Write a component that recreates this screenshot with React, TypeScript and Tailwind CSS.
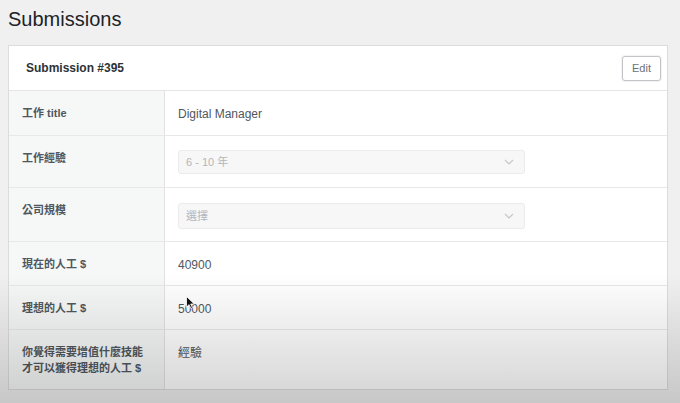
import React from "react";

const font = { fontFamily: '"Liberation Sans", "Noto Sans CJK TC", Arial, sans-serif' };

type Row = { label: React.ReactNode; h: string; value: React.ReactNode };

function Select({ text, h }: { text: string; h: string }) {
  return (
    <div
      className={`flex w-[347px] ${h} items-center justify-between rounded-[3px] border border-[#ebebec] bg-[#f7f7f8] pl-[7px] pr-[10px] text-[11px] text-[#b4b6b9]`}
    >
      <span>{text}</span>
      <svg width="10" height="6" viewBox="0 0 10 6" fill="none" stroke="#c5c7ca" strokeWidth="1.2">
        <path d="M1 1l4 4 4-4" />
      </svg>
    </div>
  );
}

const rows: Row[] = [
  { label: "工作 title", h: "h-[44px]", value: <span className="leading-[14px]">Digital Manager</span> },
  { label: "工作經驗", h: "h-[52px]", value: <Select text="6 - 10 年" h="h-[24px]" /> },
  { label: "公司規模", h: "h-[54px]", value: <div className="pt-px"><Select text="選擇" h="h-[26px]" /></div> },
  { label: "現在的人工 $", h: "h-[44px]", value: <span className="leading-[14px]">40900</span> },
  { label: "理想的人工 $", h: "h-[44px]", value: <span className="leading-[14px]">50000</span> },
  {
    label: (
      <>
        你覺得需要增值什麼技能
        <br />
        才可以獲得理想的人工 $
      </>
    ),
    h: "h-[60px]",
    value: <span className="leading-[14px]">經驗</span>,
  },
];

export default function App() {
  return (
    <div className="relative h-[403px] w-[680px] overflow-hidden bg-[#f0f0f1]" style={font}>
      <div className="pl-2 pr-[12px] pt-[7px]">
        <h1 className="text-[20px] leading-[24px] text-[#1d2327]">Submissions</h1>

        <div className="mt-[14px] border border-[#dcdcde] bg-white">
          <div className="flex h-[45px] items-center justify-between border-b border-[#e5e5e7] pl-[17px] pr-[6px]">
            <span className="text-[12px] font-bold text-[#2c3338]">Submission #395</span>
            <button className="h-[25px] rounded-[3px] border border-[#c3c4c7] bg-white px-[9px] text-[11px] text-[#6a7178] shadow-[0_0_0_1px_#f3f3f4]">
              Edit
            </button>
          </div>

          {rows.map((r, i) => (
            <div key={i} className={`flex ${r.h} ${i > 0 ? "border-t border-[#e8e8ea]" : ""}`}>
              <div className="w-[156px] shrink-0 border-r border-[#e2e2e4] bg-[#f6f7f7] pl-[13px] pt-[14px] text-[11px] font-bold leading-[16px] text-[#50575e]">
                {r.label}
              </div>
              <div className="flex-1 pl-[13px] pt-[14px] text-[12px] text-[#50575e]">{r.value}</div>
            </div>
          ))}
        </div>
      </div>

      {/* video-style shading at the bottom */}
      <div className="pointer-events-none absolute inset-x-0 bottom-0 h-[130px] bg-gradient-to-b from-transparent to-black/[0.17]" />

      {/* mouse pointer */}
      <svg className="pointer-events-none absolute left-[186px] top-[296px]" width="9" height="13" viewBox="0 0 9 13">
        <path d="M0.5 0.5v10.5l2.6-2.4 1.8 3.9 1.6-.7-1.8-3.8h3.6z" fill="#111" stroke="#fff" strokeWidth="0.8" />
      </svg>
    </div>
  );
}
